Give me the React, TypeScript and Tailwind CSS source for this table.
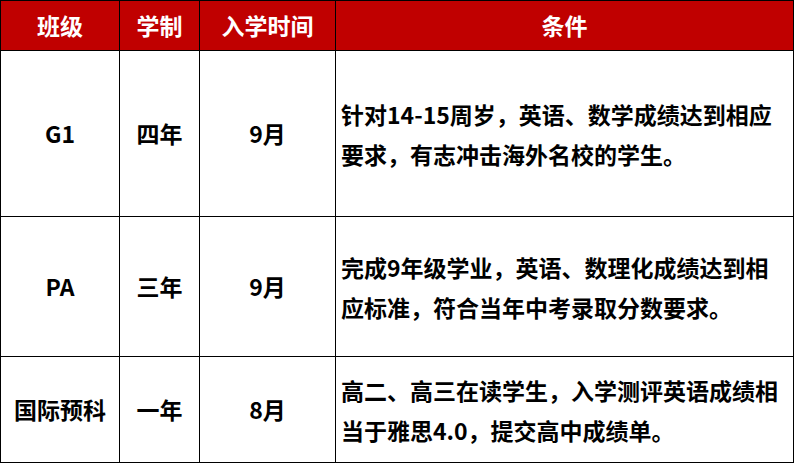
const headers = ["班级", "学制", "入学时间", "条件"];

const rows = [
  {
    name: "G1",
    years: "四年",
    month: "9月",
    lines: ["针对14-15周岁，英语、数学成绩达到相应", "要求，有志冲击海外名校的学生。"],
    h: "h-[165px]",
  },
  {
    name: "PA",
    years: "三年",
    month: "9月",
    lines: ["完成9年级学业，英语、数理化成绩达到相", "应标准，符合当年中考录取分数要求。"],
    h: "h-[139px]",
  },
  {
    name: "国际预科",
    years: "一年",
    month: "8月",
    lines: ["高二、高三在读学生，入学测评英语成绩相", "当于雅思4.0，提交高中成绩单。"],
    h: "h-[105px]",
  },
];

export default function App() {
  return (
    <div className="w-[794px] h-[464px] bg-white font-['Noto_Sans_CJK_SC',sans-serif] font-bold text-[23px]">
      <div className="grid grid-cols-[118px_79px_135px_457px] gap-px bg-black p-px">
        {/* Header */}
        {headers.map((h) => (
          <div
            key={h}
            className="h-[49px] bg-[#c00000] text-white flex items-center justify-center leading-none"
          >
            {h}
          </div>
        ))}

        {/* Body rows */}
        {rows.map((r) => (
          <>
            <div key={r.name + "a"} className={`${r.h} bg-white text-black flex items-center justify-center`}>
              {r.name}
            </div>
            <div key={r.name + "b"} className={`${r.h} bg-white text-black flex items-center justify-center`}>
              {r.years}
            </div>
            <div key={r.name + "c"} className={`${r.h} bg-white text-black flex items-center justify-center`}>
              {r.month}
            </div>
            <div key={r.name + "d"} className={`${r.h} bg-white text-black flex flex-col justify-center pl-[5px] leading-[40px] whitespace-nowrap`}>
              {r.lines.map((l) => (
                <div key={l}>{l}</div>
              ))}
            </div>
          </>
        ))}
      </div>
    </div>
  );
}
